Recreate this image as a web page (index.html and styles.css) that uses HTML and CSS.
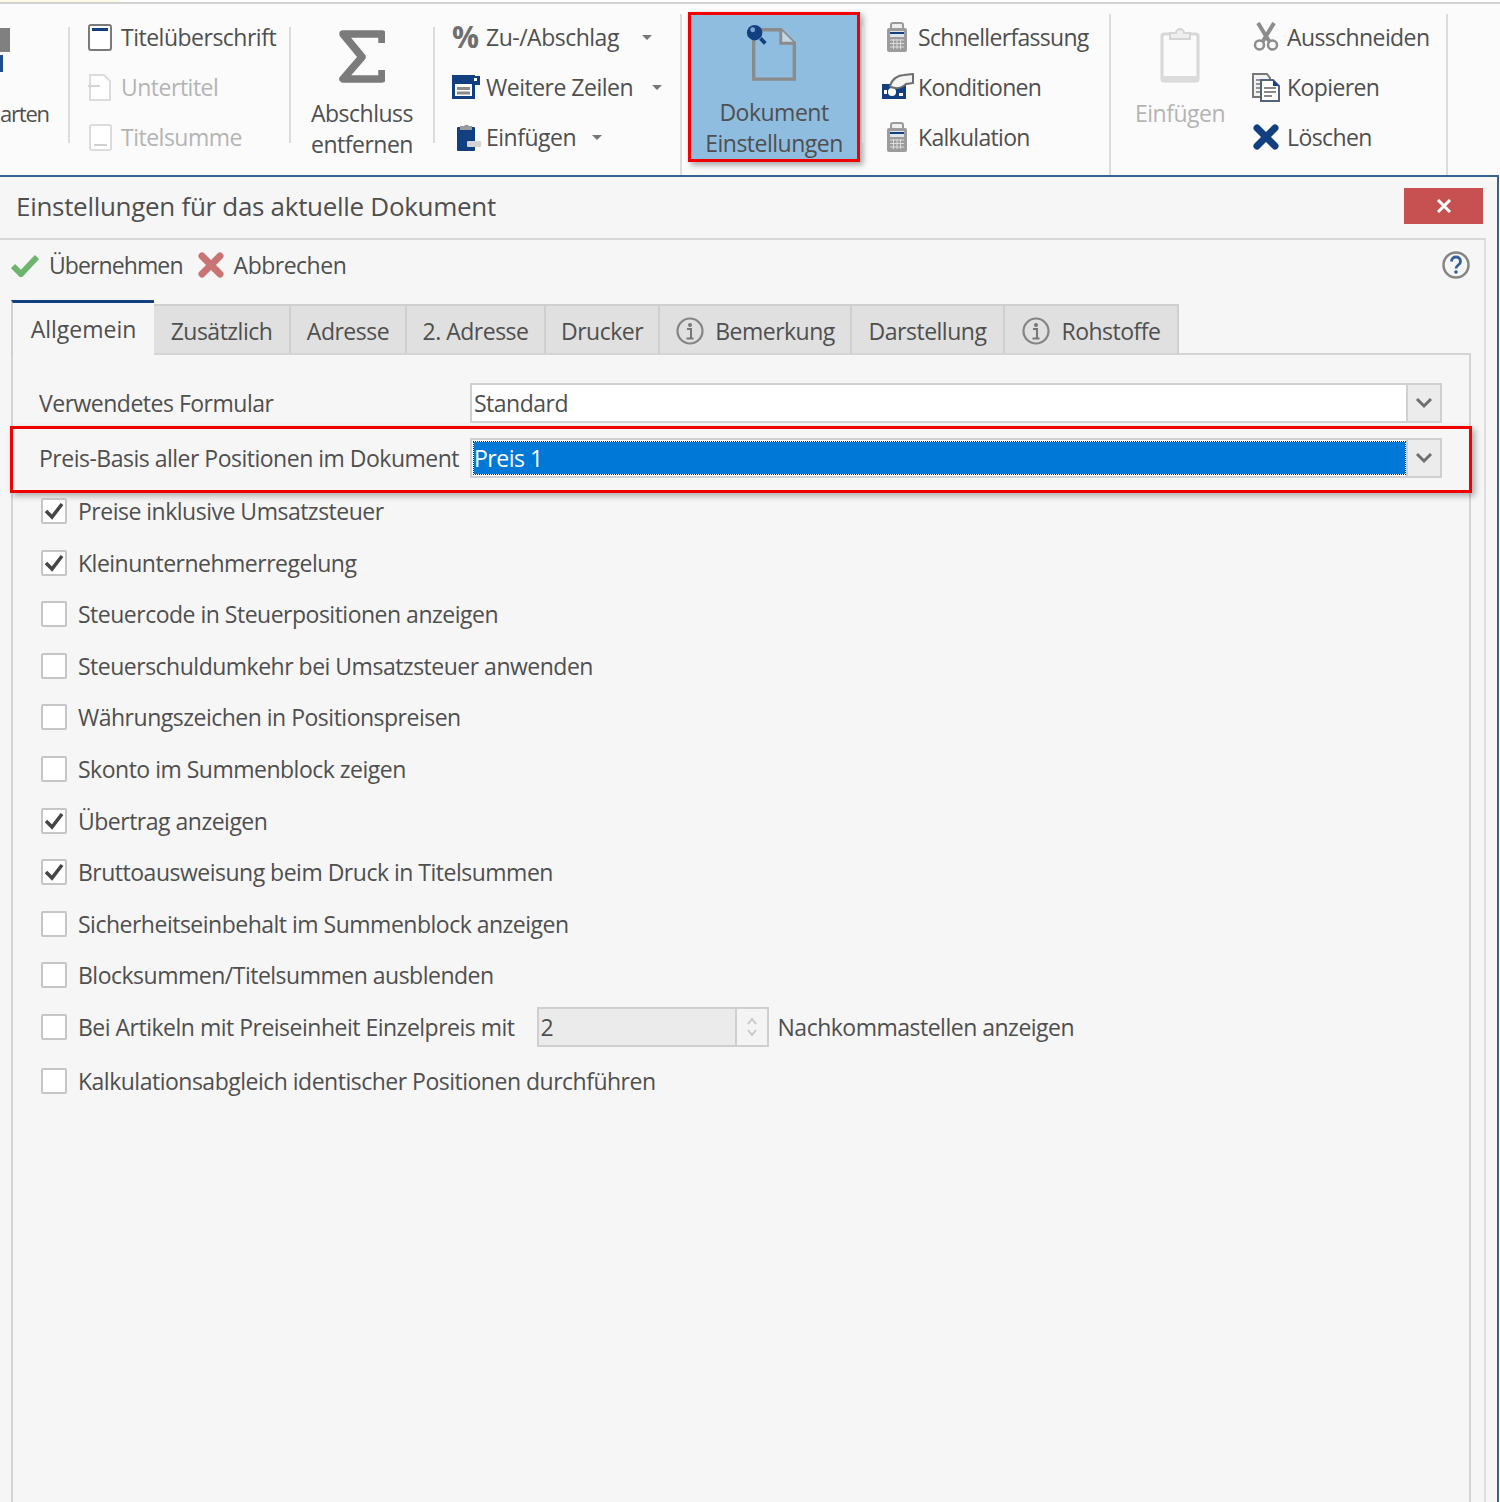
FILE: index.html
```html
<!DOCTYPE html>
<html lang="de">
<head>
    <meta charset="UTF-8">
    <title>Einstellungen für das aktuelle Dokument</title>
    <link rel="stylesheet" href="styles.css">
</head>
<body>

<div class="top-strip"><div class="top-strip-mark"></div></div>

<!-- Ribbon -->
<div class="ribbon">
    <div class="group group-cut">
        <svg class="cut-icon" width="10" height="46" viewBox="0 0 10 46"><rect y="0" width="10" height="24" fill="#808080"/><rect y="27" width="3" height="17" fill="#1f4e8c"/></svg>
        <div class="large-text">arten</div>
    </div>
    <div class="sep"></div>

    <div class="group group-titles">
        <div class="item">
            <svg class="icon" width="26" height="30" viewBox="0 0 26 30"><rect x="2" y="3" width="22" height="25" rx="2" fill="#fff" stroke="#7a7a7a" stroke-width="2"/><rect x="5" y="6" width="16" height="3" fill="#123f80"/></svg>
            <span>Titelüberschrift</span>
        </div>
        <div class="item disabled">
            <svg class="icon" width="26" height="30" viewBox="0 0 26 30"><path d="M3 3h14l6 6v19H3z" fill="#fff" stroke="#dcdcdc" stroke-width="2"/><path d="M1 14h12" stroke="#d5d5d5" stroke-width="2"/></svg>
            <span>Untertitel</span>
        </div>
        <div class="item disabled">
            <svg class="icon" width="26" height="30" viewBox="0 0 26 30"><rect x="3" y="3" width="21" height="25" rx="2" fill="#fff" stroke="#dcdcdc" stroke-width="2"/><rect x="7" y="22" width="13" height="2" fill="#cfcfcf"/></svg>
            <span>Titelsumme</span>
        </div>
    </div>
    <div class="sep"></div>

    <div class="group group-sum">
        <div class="large">
            <svg class="large-icon" width="46" height="54" viewBox="0 0 46 54"><path d="M43 13V4H4l19 23L4 49h39v-9" fill="none" stroke="#7b7b7b" stroke-width="7.500" stroke-linejoin="round"/></svg>
            <div class="large-text">Abschluss<br>entfernen</div>
        </div>
    </div>
    <div class="sep"></div>

    <div class="group group-lines">
        <div class="item">
            <span class="percent">%</span>
            <span>Zu-/Abschlag</span>
            <span class="caret caret-a"></span>
        </div>
        <div class="item">
            <svg class="icon" width="28" height="24" viewBox="0 0 28 24"><rect x="1.500" y="1.500" width="20" height="21" fill="#fff" stroke="#123f80" stroke-width="3"/><rect x="1" y="1" width="21" height="8" fill="#123f80"/><rect x="20" y="1" width="8" height="9" fill="#123f80"/><rect x="22" y="3" width="3" height="3" fill="#fff"/><path d="M5 13.500h13M5 18h13" stroke="#8a8a8a" stroke-width="3"/></svg>
            <span>Weitere Zeilen</span>
            <span class="caret caret-b"></span>
        </div>
        <div class="item">
            <svg class="icon icon-paste" width="26" height="30" viewBox="0 0 26 30"><rect x="1" y="5" width="18" height="24" rx="1" fill="#123f80"/><path d="M4 8V4h4a3 3 0 0 1 5 0h3v4z" fill="#9a9a9a"/><rect x="11" y="19" width="14" height="6" rx="1" fill="#d4d4d4"/></svg>
            <span>Einfügen</span>
            <span class="caret caret-c"></span>
        </div>
    </div>
    <div class="sep sep-tall"></div>

    <div class="group group-doc">
        <div class="large large-active">
            <svg class="large-icon" width="58" height="62" viewBox="0 0 58 62"><path d="M10 8h26l14 14v37H8V16" fill="none" stroke="#8b8b8b" stroke-width="3.500"/><path d="M36 8v14h14" fill="#c3d6e6" stroke="#8b8b8b" stroke-width="3"/><circle cx="9" cy="11" r="8" fill="#123f80"/><circle cx="7" cy="8" r="2.500" fill="#7fa6d6"/><path d="M15 17l5 5" stroke="#123f80" stroke-width="4"/></svg>
            <div class="large-text">Dokument<br>Einstellungen</div>
        </div>
    </div>
    <div class="sep"></div>

    <div class="group group-calc">
        <div class="item">
            <svg class="icon" width="26" height="30" viewBox="0 0 26 30"><use href="#calc"/></svg>
            <span>Schnellerfassung</span>
        </div>
        <div class="item">
            <svg class="icon icon-wide" width="32" height="28" viewBox="0 0 32 28"><rect x="0" y="11" width="24" height="15" fill="#123f80"/><circle cx="10" cy="19" r="4" fill="#fff"/><rect x="2" y="17" width="3" height="4" fill="#fff"/><rect x="17" y="20" width="4" height="3" fill="#fff"/><path d="M8 13C10 6 16 2 22 2l9-1v9l-7 1c-4 4-10 5-15 3z" fill="#f4f4f4" stroke="#6e6e6e" stroke-width="2" stroke-linejoin="round"/></svg>
            <span>Konditionen</span>
        </div>
        <div class="item">
            <svg class="icon" width="26" height="30" viewBox="0 0 26 30"><use href="#calc"/></svg>
            <span>Kalkulation</span>
        </div>
    </div>
    <div class="sep sep-tall"></div>

    <div class="group group-clip">
        <div class="large disabled">
            <svg class="large-icon" width="42" height="58" viewBox="0 0 42 58"><path d="M5 9h32a2 2 0 0 1 2 2v43a2 2 0 0 1-2 2H5a2 2 0 0 1-2-2V11a2 2 0 0 1 2-2z" fill="#fbfbfb" stroke="#d8d8d8" stroke-width="3"/><path d="M11 14V8h6a4 4 0 0 1 8 0h6v6z" fill="#eee" stroke="#d5d5d5" stroke-width="2"/><rect x="3" y="51" width="36" height="5" fill="#dcdcdc"/></svg>
            <div class="large-text">Einfügen</div>
        </div>
    </div>

    <div class="group group-edit">
        <div class="item">
            <svg class="icon" width="26" height="30" viewBox="0 0 26 30"><path d="M5 1l11 18M21 1L10 19" stroke="#8c8c8c" stroke-width="4"/><circle cx="6.500" cy="23" r="4.500" fill="none" stroke="#8c8c8c" stroke-width="2.500"/><circle cx="19.500" cy="23" r="4.500" fill="none" stroke="#8c8c8c" stroke-width="2.500"/></svg>
            <span>Ausschneiden</span>
        </div>
        <div class="item">
            <svg class="icon icon-copy" width="28" height="30" viewBox="0 0 28 30"><path d="M1 2h14l3 4v19H1z" fill="#f2f2f2" stroke="#777" stroke-width="2"/><path d="M4 8h4M4 12h4M4 16h4M4 20h4" stroke="#777" stroke-width="1.500"/><path d="M9 8h12l6 6v15H9z" fill="#fff" stroke="#51637e" stroke-width="2"/><path d="M21 8l6 6h-6z" fill="#123f80"/><path d="M12 16h12M12 20h12M12 24h8" stroke="#8a8a8a" stroke-width="2"/></svg>
            <span>Kopieren</span>
        </div>
        <div class="item">
            <svg class="icon" width="26" height="26" viewBox="0 0 26 26"><path d="M4 4l18 18M22 4L4 22" stroke="#123f80" stroke-width="7" stroke-linecap="round"/></svg>
            <span>Löschen</span>
        </div>
    </div>
    <div class="sep sep-tall"></div>
</div>

<!-- Dialog -->
<div class="dialog">
    <div class="dialog-title">
        <h1>Einstellungen für das aktuelle Dokument</h1>
        <div class="close-btn">
            <svg width="16" height="14" viewBox="0 0 16 14"><path d="M2 1l12 12M14 1L2 13" stroke="#fff" stroke-width="3"/></svg>
        </div>
    </div>

    <div class="dialog-body">
        <div class="toolbar">
            <div class="tool tool-apply">
                <svg width="28" height="24" viewBox="0 0 28 24"><path d="M2 13l8 8L26 4" fill="none" stroke="#6db56d" stroke-width="6"/></svg>
                <span>Übernehmen</span>
            </div>
            <div class="tool">
                <svg width="26" height="26" viewBox="0 0 26 26"><path d="M4 4l18 18M22 4L4 22" stroke="#c97474" stroke-width="7" stroke-linecap="round"/></svg>
                <span>Abbrechen</span>
            </div>
            <svg class="help" width="30" height="30" viewBox="0 0 30 30"><circle cx="15" cy="15" r="12.500" fill="none" stroke="#858585" stroke-width="2.500"/><path d="M10.500 11.500c0-6 9-6 9 0 0 3.500-4.500 3.500-4.500 7" fill="none" stroke="#2f5f9e" stroke-width="2.800"/><circle cx="15" cy="22" r="1.800" fill="#2f5f9e"/></svg>
        </div>

        <div class="tabs">
            <div class="tab tab-active">Allgemein</div>
            <div class="tab tab-zusatz">Zusätzlich</div>
            <div class="tab tab-adresse">Adresse</div>
            <div class="tab tab-adresse2">2. Adresse</div>
            <div class="tab tab-drucker">Drucker</div>
            <div class="tab tab-bemerkung">
                <svg width="30" height="30" viewBox="0 0 30 30"><use href="#info"/></svg>
                Bemerkung
            </div>
            <div class="tab tab-darstellung">Darstellung</div>
            <div class="tab tab-rohstoffe">
                <svg width="30" height="30" viewBox="0 0 30 30"><use href="#info"/></svg>
                Rohstoffe
            </div>
        </div>

        <div class="panel">
            <div class="form-row">
                <label class="form-label">Verwendetes Formular</label>
                <div class="combo">
                    <div class="combo-value">Standard</div>
                    <div class="combo-btn"><svg width="18" height="12" viewBox="0 0 18 12"><path d="M2 2l7 7 7-7" fill="none" stroke="#6e6e6e" stroke-width="3"/></svg></div>
                </div>
            </div>

            <div class="form-row form-row-marked">
                <label class="form-label">Preis-Basis aller Positionen im Dokument</label>
                <div class="combo">
                    <div class="combo-value"><div class="combo-selected">Preis 1</div></div>
                    <div class="combo-btn"><svg width="18" height="12" viewBox="0 0 18 12"><path d="M2 2l7 7 7-7" fill="none" stroke="#6e6e6e" stroke-width="3"/></svg></div>
                </div>
            </div>

            <div class="checks">
                <div class="check-row"><span class="box on"><svg width="20" height="18" viewBox="0 0 20 18"><use href="#tick"/></svg></span>Preise inklusive Umsatzsteuer</div>
                <div class="check-row"><span class="box on"><svg width="20" height="18" viewBox="0 0 20 18"><use href="#tick"/></svg></span>Kleinunternehmerregelung</div>
                <div class="check-row"><span class="box"></span>Steuercode in Steuerpositionen anzeigen</div>
                <div class="check-row"><span class="box"></span>Steuerschuldumkehr bei Umsatzsteuer anwenden</div>
                <div class="check-row"><span class="box"></span>Währungszeichen in Positionspreisen</div>
                <div class="check-row"><span class="box"></span>Skonto im Summenblock zeigen</div>
                <div class="check-row"><span class="box on"><svg width="20" height="18" viewBox="0 0 20 18"><use href="#tick"/></svg></span>Übertrag anzeigen</div>
                <div class="check-row"><span class="box on"><svg width="20" height="18" viewBox="0 0 20 18"><use href="#tick"/></svg></span>Bruttoausweisung beim Druck in Titelsummen</div>
                <div class="check-row"><span class="box"></span>Sicherheitseinbehalt im Summenblock anzeigen</div>
                <div class="check-row"><span class="box"></span>Blocksummen/Titelsummen ausblenden</div>
                <div class="check-row check-row-spin">
                    <span class="box"></span>Bei Artikeln mit Preiseinheit Einzelpreis mit
                    <div class="spin">
                        <div class="spin-value">2</div>
                        <div class="spin-btn">
                            <svg width="12" height="8" viewBox="0 0 12 8"><path d="M2 7l4-5 4 5" fill="none" stroke="#c8c8c8" stroke-width="2"/></svg>
                            <svg width="12" height="8" viewBox="0 0 12 8"><path d="M2 1l4 5 4-5" fill="none" stroke="#c8c8c8" stroke-width="2"/></svg>
                        </div>
                    </div>
                    Nachkommastellen anzeigen
                </div>
                <div class="check-row"><span class="box"></span>Kalkulationsabgleich identischer Positionen durchführen</div>
            </div>
        </div>
    </div>
</div>

<!-- shared icons -->
<svg class="defs" width="0" height="0">
    <symbol id="calc" viewBox="0 0 26 30">
        <rect x="7" y="1" width="12" height="9" rx="2" fill="#efefef" stroke="#9a9a9a" stroke-width="2"/>
        <rect x="3" y="6" width="20" height="24" rx="2" fill="#9c9c9c"/>
        <rect x="6" y="9" width="14" height="6" fill="#dfe5ec"/>
        <rect x="6" y="10" width="14" height="2" fill="#123f80"/>
        <path d="M6 18h14M6 21.500h14M6 25h14M9.500 17v10M13 17v10M16.500 17v10" stroke="#dcdcdc" stroke-width="1"/>
    </symbol>
    <symbol id="info" viewBox="0 0 30 30">
        <circle cx="15" cy="15" r="12.500" fill="none" stroke="#858585" stroke-width="2.200"/>
        <circle cx="15" cy="9" r="2" fill="#777"/>
        <path d="M12 13h4v9M11.500 22.500h7" fill="none" stroke="#777" stroke-width="2"/>
    </symbol>
    <symbol id="tick" viewBox="0 0 20 18">
        <path d="M2 9l6 6L18 2" fill="none" stroke="#454545" stroke-width="3.500"/>
    </symbol>
</svg>

</body>
</html>
```

FILE: styles.css
```css
* {
    box-sizing: border-box;
}

html, body {
    margin: 0;
    height: 1502px;
    overflow: hidden;
}

body {
    font-family: "Open Sans", "Noto Sans", sans-serif;
    font-size: 23px;
    letter-spacing: -0.5px;
    color: #4f4f4f;
    background-color: #fff;
    display: flex;
    flex-direction: column;
}

.defs {
    display: none;
}

.top-strip {
    height: 4px;
    flex: none;
    border-bottom: 2px solid #d2d2d2;
}

.top-strip-mark {
    width: 120px;
    height: 2px;
    background-color: #fdfbe4;
}

/* ribbon */
.ribbon {
    height: 171px;
    flex: none;
    display: flex;
    background-color: #fbfbfb;
}

.group {
    flex: none;
    display: flex;
    flex-direction: column;
    padding-top: 8px;
}

.sep {
    flex: none;
    width: 2px;
    height: 116px;
    margin-top: 23px;
    background-color: #dcdcdc;
}

.sep-tall {
    height: auto;
    margin-top: 10px;
}

.item {
    height: 50px;
    display: flex;
    align-items: center;
    white-space: nowrap;
}

.icon {
    flex: none;
}

.disabled {
    color: #b4b4b4;
}

.group-cut {
    width: 68px;
    padding: 24px 20px 0 0;
}

.group-cut .large-text {
    margin-top: 24px;
    text-align: right;
    font-size: 22px;
    letter-spacing: -1.2px;
}

.large {
    display: flex;
    flex-direction: column;
    align-items: center;
}

.large-icon {
    display: block;
    margin-bottom: 15px;
}

.large-text {
    text-align: center;
    line-height: 31px;
    white-space: nowrap;
}

.group-titles {
    width: 219px;
    padding-left: 17px;
}

.group-titles .icon {
    margin-right: 8px;
}

.group-sum {
    width: 142px;
    padding-top: 26px;
    align-items: center;
}

.group-sum .large-icon {
    margin-bottom: 14px;
}

.group-lines {
    width: 245px;
    padding-left: 17px;
}

.group-lines .icon {
    margin-right: 6px;
}

.group-lines .icon-paste {
    margin-left: 4px;
    margin-right: 4px;
}

.percent {
    width: 34px;
    font-size: 30px;
    font-weight: 700;
    color: #6f6f6f;
    line-height: 1;
}

.caret {
    width: 0;
    height: 0;
    border-left: 5px solid transparent;
    border-right: 5px solid transparent;
    border-top: 5px solid #777;
}

.caret-a {
    margin-left: 23px;
}

.caret-b {
    margin-left: 19px;
}

.caret-c {
    margin-left: 16px;
}

.group-doc {
    width: 180px;
    padding: 8px 6px 0;
}

.large-active {
    width: 172px;
    height: 150px;
    flex: none;
    padding-top: 7px;
    background-color: #8fbde0;
    border: 3px solid #f00000;
    box-shadow: 3px 3px 6px rgba(0, 0, 0, 0.35);
}

.group-calc {
    width: 245px;
    padding-left: 20px;
    letter-spacing: -0.7px;
}

.group-calc .icon {
    margin-right: 8px;
}

.group-calc .icon-wide {
    margin-left: -2px;
    margin-right: 4px;
}

.group-clip {
    width: 138px;
    padding-top: 21px;
    align-items: center;
}

.group-edit {
    width: 197px;
    padding-left: 4px;
    letter-spacing: -0.6px;
}

.group-edit .icon {
    margin-right: 8px;
}

.group-edit .icon-copy {
    margin-left: -1px;
    margin-right: 7px;
}

/* dialog */
.dialog {
    flex: 1;
    width: 1499px;
    display: flex;
    flex-direction: column;
    background-color: #f6f6f6;
    border-top: 2px solid #3a6190;
    border-right: 2px solid #3a6190;
    min-height: 0;
}

.dialog-title {
    height: 61px;
    flex: none;
    display: flex;
    align-items: center;
    justify-content: space-between;
    padding: 0 14px 4px 16px;
}

.dialog-title h1 {
    margin: 0;
    font-size: 26px;
    font-weight: 400;
    letter-spacing: -0.3px;
}

.close-btn {
    width: 79px;
    height: 36px;
    display: flex;
    align-items: center;
    justify-content: center;
    background-color: #c75050;
}

.dialog-body {
    flex: 1;
    width: 1486px;
    display: flex;
    flex-direction: column;
    border-top: 2px solid #d8d8d8;
    border-right: 2px solid #dedede;
    min-height: 0;
}

.toolbar {
    height: 60px;
    flex: none;
    display: flex;
    align-items: center;
    padding: 0 13px 10px 11px;
}

.tool {
    display: flex;
    align-items: center;
    gap: 10px;
    margin-right: 11px;
}

.tool-apply {
    letter-spacing: -0.9px;
    margin-right: 15px;
}

.help {
    margin-left: auto;
}

.tabs {
    height: 53px;
    flex: none;
    margin-left: 11px;
    display: flex;
    align-items: flex-start;
}

.tab {
    height: 49px;
    margin-top: 4px;
    padding-top: 3px;
    display: flex;
    align-items: center;
    justify-content: center;
    gap: 10px;
    background-color: #e0e0e0;
    border-top: 2px solid #cfcfcf;
    border-right: 2px solid #cfcfcf;
}

.tab-active {
    width: 143px;
    height: 55px;
    margin-top: 0;
    padding-top: 0;
    background-color: #f6f6f6;
    border-top: 3px solid #123f80;
    border-left: 2px solid #d0d0d0;
    border-right: none;
    letter-spacing: 0;
    position: relative;
}

.tab-zusatz { width: 137px; }
.tab-adresse { width: 116px; }
.tab-adresse2 { width: 139px; }
.tab-drucker { width: 114px; }
.tab-bemerkung { width: 192px; }
.tab-darstellung { width: 153px; }
.tab-rohstoffe { width: 174px; }

.panel {
    flex: 1;
    width: 1460px;
    margin-left: 11px;
    padding-top: 28px;
    border: 2px solid #d4d4d4;
    border-bottom: none;
}

.form-row {
    display: flex;
    align-items: center;
    height: 40px;
    padding-left: 26px;
    margin-bottom: 3px;
}

.form-label {
    width: 431px;
    flex: none;
    white-space: nowrap;
}

.form-row-marked {
    height: 67px;
    margin: 0 -3px;
    padding: 0 0 3px 26px;
    border: 3px solid #f00000;
    box-shadow: 3px 3px 6px rgba(0, 0, 0, 0.3);
}

.combo {
    width: 972px;
    height: 40px;
    flex: none;
    display: flex;
    background-color: #fff;
    border: 2px solid #d0d0d0;
}

.combo-value {
    flex: 1;
    padding: 2px 1px 2px 2px;
    line-height: 32px;
}

.combo-selected {
    height: 32px;
    color: #fff;
    background-color: #0078d7;
    outline: 1px dotted #3a2a10;
}

.combo-btn {
    width: 34px;
    display: flex;
    align-items: center;
    justify-content: center;
    background-color: #ececec;
    border-left: 2px solid #d0d0d0;
}

.checks {
    display: flex;
    flex-direction: column;
    gap: 25.6px;
    padding: 5px 0 0 28px;
}

.check-row {
    height: 26px;
    display: flex;
    align-items: center;
    gap: 11px;
    white-space: nowrap;
}

.box {
    width: 26px;
    height: 26px;
    flex: none;
    display: flex;
    align-items: center;
    justify-content: center;
    background-color: #fff;
    border: 2px solid #c6c6c6;
    border-radius: 2px;
}

.check-row-spin {
    margin-bottom: 2px;
}

.spin {
    width: 232px;
    height: 40px;
    margin-left: 11px;
    margin-right: -2px;
    display: flex;
    background-color: #ebebeb;
    border: 2px solid #cfcfcf;
}

.spin-value {
    flex: 1;
    padding-left: 2px;
    line-height: 36px;
}

.spin-btn {
    width: 32px;
    display: flex;
    flex-direction: column;
    align-items: center;
    justify-content: center;
    gap: 4px;
    background-color: #f4f4f4;
    border-left: 2px solid #cfcfcf;
}
```
